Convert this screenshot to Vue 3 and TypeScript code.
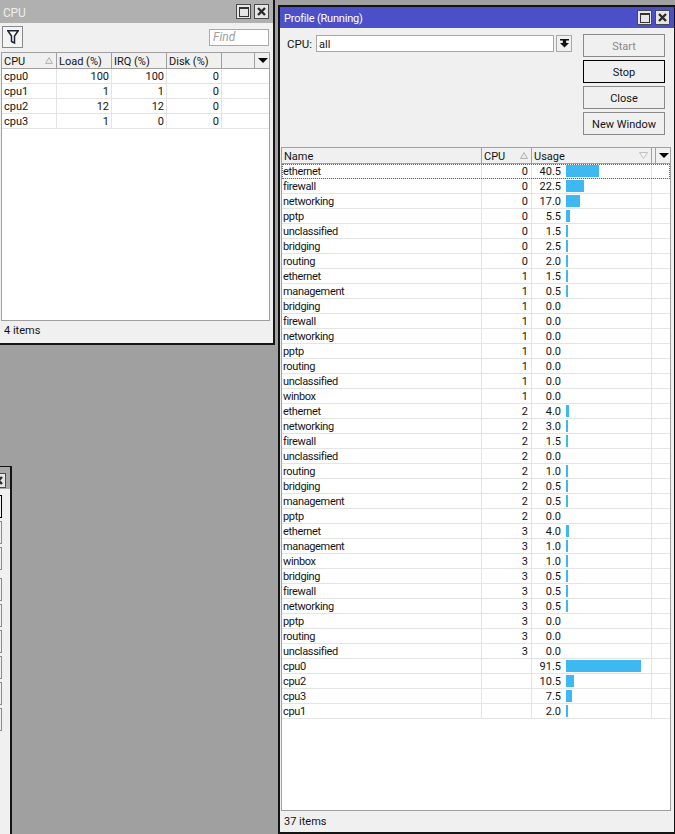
<script setup lang="ts">
interface CpuRow { cpu: string; load: string; irq: string; disk: string }
interface ProfileRow { name: string; cpu: string; usage: string; bar: number }

const cpuRows: CpuRow[] = [
  { cpu: 'cpu0', load: '100', irq: '100', disk: '0' },
  { cpu: 'cpu1', load: '1', irq: '1', disk: '0' },
  { cpu: 'cpu2', load: '12', irq: '12', disk: '0' },
  { cpu: 'cpu3', load: '1', irq: '0', disk: '0' },
]

const raw: [string, string, string][] = [
  ['ethernet', '0', '40.5'], ['firewall', '0', '22.5'], ['networking', '0', '17.0'],
  ['pptp', '0', '5.5'], ['unclassified', '0', '1.5'], ['bridging', '0', '2.5'],
  ['routing', '0', '2.0'], ['ethernet', '1', '1.5'], ['management', '1', '0.5'],
  ['bridging', '1', '0.0'], ['firewall', '1', '0.0'], ['networking', '1', '0.0'],
  ['pptp', '1', '0.0'], ['routing', '1', '0.0'], ['unclassified', '1', '0.0'],
  ['winbox', '1', '0.0'], ['ethernet', '2', '4.0'], ['networking', '2', '3.0'],
  ['firewall', '2', '1.5'], ['unclassified', '2', '0.0'], ['routing', '2', '1.0'],
  ['bridging', '2', '0.5'], ['management', '2', '0.5'], ['pptp', '2', '0.0'],
  ['ethernet', '3', '4.0'], ['management', '3', '1.0'], ['winbox', '3', '1.0'],
  ['bridging', '3', '0.5'], ['firewall', '3', '0.5'], ['networking', '3', '0.5'],
  ['pptp', '3', '0.0'], ['routing', '3', '0.0'], ['unclassified', '3', '0.0'],
  ['cpu0', '', '91.5'], ['cpu2', '', '10.5'], ['cpu3', '', '7.5'], ['cpu1', '', '2.0'],
]

function barWidth(u: number): number {
  if (u <= 0) return 0
  return Math.max(2, Math.round(u * 0.82 - 0.15))
}

const profileRows: ProfileRow[] = raw.map(([name, cpu, usage]) => ({
  name, cpu, usage, bar: barWidth(parseFloat(usage)),
}))

const sideButtons = [495, 521, 547, 578, 604, 630, 656, 682, 708]
const actions = ['Start', 'Stop', 'Close', 'New Window']
</script>

<template>
  <div class="desk">
    <!-- CPU window -->
    <section class="win cpu-win">
      <header class="title grey">
        <span class="title-text">CPU</span>
        <span class="win-btns">
          <span class="wb"><span class="max"></span></span>
          <span class="wb"><svg width="11" height="11" viewBox="0 0 11 11"><path d="M2 2l7 7M9 2l-7 7" stroke="#2a2a2a" stroke-width="2.4" fill="none"/></svg></span>
        </span>
      </header>
      <div class="cpu-tools">
        <span class="filter">
          <svg width="12" height="14" viewBox="0 0 12 14"><path d="M.8 .8h10.400L7.500 6v7L4.500 11.500V6z" fill="#fff" stroke="#1c2438" stroke-width="1.5"/></svg>
        </span>
        <span class="find">Find</span>
      </div>
      <div class="table cpu-table">
        <div class="thead cpu-grid">
          <span class="th">CPU<svg class="sort" width="8" height="7" viewBox="0 0 8 7"><path d="M4 .5L7.500 6.500H.5z" fill="#e8e8e8" stroke="#b4b4b4"/></svg></span>
          <span class="th">Load (%)</span>
          <span class="th">IRQ (%)</span>
          <span class="th">Disk (%)</span>
          <span class="th"></span>
          <span class="th arrow"><i></i></span>
        </div>
        <div v-for="r in cpuRows" :key="r.cpu" class="row cpu-grid">
          <span class="td">{{ r.cpu }}</span>
          <span class="td num">{{ r.load }}</span>
          <span class="td num">{{ r.irq }}</span>
          <span class="td num">{{ r.disk }}</span>
          <span class="td"></span>
        </div>
      </div>
      <footer class="status">4 items</footer>
    </section>

    <!-- partially visible window -->
    <section class="win side-win">
      <header class="side-title">
        <span class="wb"><svg width="11" height="11" viewBox="0 0 11 11"><path d="M2 2l7 7M9 2l-7 7" stroke="#2a2a2a" stroke-width="2.4" fill="none"/></svg></span>
      </header>
      <span
        v-for="(y, i) in sideButtons"
        :key="y"
        class="side-btn"
        :class="{ first: i === 0 }"
        :style="{ top: y - 467 + 'px' }"
      ></span>
    </section>

    <!-- Profile window -->
    <section class="win prof-win">
      <header class="title blue">
        <span class="title-text">Profile (Running)</span>
        <span class="win-btns">
          <span class="wb"><span class="max"></span></span>
          <span class="wb"><svg width="11" height="11" viewBox="0 0 11 11"><path d="M2 2l7 7M9 2l-7 7" stroke="#2a2a2a" stroke-width="2.4" fill="none"/></svg></span>
        </span>
      </header>
      <div class="prof-top">
        <div class="cpu-field">
          <label class="lbl">CPU:</label>
          <span class="input">all</span>
          <span class="drop">
            <svg width="9" height="9" viewBox="0 0 9 9"><path d="M0 0h9v1.500H0zM2.800 1.500h3.400v2.500H9L4.500 8.500 0 4h2.800z" fill="#111"/></svg>
          </span>
        </div>
        <div class="actions">
          <span
            v-for="a in actions"
            :key="a"
            class="action"
            :class="{ disabled: a === 'Start', focus: a === 'Stop' }"
          >{{ a }}</span>
        </div>
      </div>
      <div class="table prof-table">
        <div class="thead prof-grid">
          <span class="th">Name</span>
          <span class="th">CPU<svg class="sort" width="8" height="7" viewBox="0 0 8 7"><path d="M4 .5L7.500 6.500H.5z" fill="#e8e8e8" stroke="#b4b4b4"/></svg></span>
          <span class="th">Usage<svg class="sort" width="9" height="7" viewBox="0 0 9 7"><path d="M4.500 6.500L8.500 .5H.5z" fill="#f4f4f4" stroke="#c0c0c0"/></svg></span>
          <span class="th"></span>
          <span class="th arrow"><i></i></span>
        </div>
        <div class="tbody">
          <div
            v-for="(r, i) in profileRows"
            :key="i"
            class="row prof-grid"
            :class="{ selected: i === 0 }"
          >
            <span class="td name">{{ r.name }}</span>
            <span class="td num">{{ r.cpu }}</span>
            <span class="td usage">
              <span class="val">{{ r.usage }}</span>
              <span v-if="r.bar" class="bar" :style="{ width: r.bar + 'px' }"></span>
            </span>
            <span class="td"></span>
          </div>
        </div>
      </div>
      <footer class="status">37 items</footer>
    </section>
  </div>
</template>

<style>
html, body { margin: 0; background: #a0a0a0; overflow: hidden; }
</style>

<style scoped>
.desk {
  position: relative;
  width: 675px;
  height: 834px;
  background: #a0a0a0;
  overflow: hidden;
  font-family: Roboto, "Liberation Sans", Arial, sans-serif;
  font-size: 11px;
  color: #141414;
}
.win {
  position: absolute;
  box-sizing: border-box;
  background: #f0f0f0;
  border: 2px solid #141414;
  display: flex;
  flex-direction: column;
}
.cpu-win { left: -2px; top: -2px; width: 277px; height: 347px; }
.prof-win { left: 278px; top: 5px; width: 398px; height: 829px; }
.side-win { left: -40px; top: 466px; width: 52px; height: 380px; border-width: 1px 2px 0 0; }

.title {
  flex: none;
  display: flex;
  align-items: center;
  justify-content: space-between;
  box-sizing: border-box;
  font-size: 11px;
  letter-spacing: -0.2px;
  color: #fff;
}
.grey { height: 23px; background: #b0b0b0; color: #eee; padding: 0 4px 0 3px; }
.grey .title-text { padding-top: 2px; font-size: 12px; }
.blue { height: 21px; background: #4c50c8; padding: 0 4px 0 4px; }
.title-text { padding-top: 1px; }
.win-btns { display: flex; gap: 3px; }
.wb {
  box-sizing: border-box;
  width: 15px;
  height: 15px;
  background: #e6e6e6;
  border: 1px solid #4a4a4a;
  display: flex;
  align-items: center;
  justify-content: center;
  flex: none;
}
.max { box-sizing: border-box; width: 10px; height: 10px; border: 1px solid #333; border-top-width: 2px; }

.cpu-tools {
  height: 29px;
  flex: none;
  display: flex;
  justify-content: space-between;
  align-items: flex-start;
  padding: 3px 4px 0 2px;
  box-sizing: border-box;
}
.filter {
  box-sizing: border-box;
  width: 21px;
  height: 22px;
  border: 1px solid #888;
  background: #f4f4f4;
  display: flex;
  align-items: center;
  justify-content: center;
}
.find {
  box-sizing: border-box;
  width: 60px;
  height: 17px;
  margin-top: 3px;
  background: #fff;
  border: 1px solid #aaa;
  color: #a0a0a0;
  font-style: italic;
  font-size: 12px;
  line-height: 15px;
  padding-left: 3px;
}

.table {
  box-sizing: border-box;
  flex: 1;
  background: #fff;
  border: 1px solid #a0a0a0;
  min-height: 0;
  overflow: hidden;
}
.cpu-table { margin: 0 3px 0 1px; }
.prof-table { margin: 0 3px 0 1px; }

.thead { height: 16px; box-sizing: border-box; background: #f0f0f0; border-bottom: 1px solid #a0a0a0; position: relative; }
.th {
  position: relative;
  box-sizing: border-box;
  border-right: 1px solid #a0a0a0;
  padding-left: 2px;
  line-height: 18px;
  white-space: nowrap;
  overflow: hidden;
}
.th:last-child { border-right: 0; }
.sort { position: absolute; right: 3px; top: 4px; }
.arrow { display: flex; align-items: center; justify-content: center; }
.arrow i {
  width: 0;
  height: 0;
  border-left: 5px solid transparent;
  border-right: 5px solid transparent;
  border-top: 5px solid #000;
}
.cpu-grid { display: grid; grid-template-columns: 55px 55px 55px 55px 33px 1fr; }
.prof-grid { display: grid; grid-template-columns: 200px 50px 120px 4px 1fr; }
.row { height: 15px; box-sizing: border-box; border-bottom: 1px solid #e4e4e4; }
.cpu-table .row { grid-template-columns: 55px 55px 55px 55px 1fr; }
.prof-table .row { grid-template-columns: 200px 50px 120px 1fr; }
.td {
  box-sizing: border-box;
  border-right: 1px solid #e4e4e4;
  line-height: 16px;
  padding: 0 2px 0 2px;
  white-space: nowrap;
  overflow: hidden;
}
.td:last-child { border-right: 0; }
.num { text-align: right; }
.name { letter-spacing: -0.35px; padding-left: 1px; }
.prof-table .num { padding-right: 3px; }
.usage { display: flex; align-items: center; padding: 0; }
.val { box-sizing: border-box; width: 29px; height: 14px; text-align: right; flex: none; line-height: 16px; }
.bar { display: block; height: 12px; margin-left: 5px; background: #3db8f0; flex: none; }
.selected { outline: 1px dotted #666; outline-offset: -1px; }

.status {
  flex: none;
  box-sizing: border-box;
  line-height: 14px;
  padding-left: 4px;
}
.cpu-win .status { height: 22px; padding-top: 3px; }
.prof-win .status { height: 21px; padding-top: 4px; }

.prof-top {
  height: 119px;
  flex: none;
  display: flex;
  justify-content: space-between;
  box-sizing: border-box;
  padding: 7px 9px 0 7px;
}
.cpu-field { display: flex; align-items: flex-start; }
.lbl { font-size: 11.500px; line-height: 18px; width: 29px; flex: none; }
.input {
  box-sizing: border-box;
  width: 238px;
  height: 17px;
  background: #fff;
  border: 1px solid #a8a8a8;
  line-height: 17px;
  padding-left: 2px;
}
.drop {
  box-sizing: border-box;
  width: 16px;
  height: 17px;
  margin-left: 2px;
  border: 1px solid #a8a8a8;
  background: #f0f0f0;
  display: flex;
  align-items: center;
  justify-content: center;
}
.actions { display: flex; flex-direction: column; gap: 3px; margin-top: -1px; }
.action {
  box-sizing: border-box;
  width: 82px;
  height: 23px;
  border: 1px solid #8a8a8a;
  background: #f0f0f0;
  text-align: center;
  line-height: 23px;
  font-size: 11px;
}
.action.disabled { color: #8a8a8a; }
.action.focus { border-color: #000; }

.side-title {
  height: 22px;
  display: flex;
  justify-content: flex-end;
  padding: 6px 4px 0 0;
  background: #a8a8a8;
  box-sizing: border-box;
}
.side-btn {
  position: absolute;
  left: 0;
  width: 42px;
  height: 23px;
  box-sizing: border-box;
  border: 1px solid #8a8a8a;
  background: #f0f0f0;
}
.side-btn.first { border-color: #000; }
</style>
